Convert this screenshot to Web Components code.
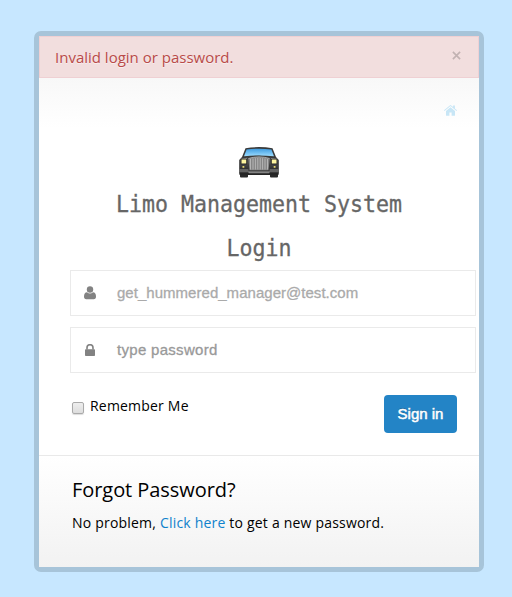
<!DOCTYPE html>
<html lang="en">
<head>
<meta charset="utf-8">
<title>Limo Management System Login</title>
<style>
body{margin:0;height:597px;background:#c7e7ff;overflow:hidden;font-family:"Open Sans","Noto Sans",sans-serif;color:#000;display:flex;justify-content:center;align-items:flex-start}
</style>
</head>
<body>
<limo-card></limo-card>
<script>
function define(name, html){
  const t=document.createElement('template');t.innerHTML=html;
  customElements.define(name,class extends HTMLElement{
    constructor(){super();this.attachShadow({mode:'open'}).append(t.content.cloneNode(true));}
  });
}
define('limo-alert',`<style>
:host{display:flex;box-sizing:border-box;height:42px;border:1px solid #efd0d3;background:#f2dede;color:#b94a48;font-size:15px;padding:0 17px 0 15px;justify-content:space-between;line-height:41px;text-shadow:0 1px 0 rgba(255,255,255,.5)}
svg{width:9px;height:9px;margin-top:14px;stroke:#c2b2b2;stroke-width:1.8;fill:none}
</style><span><slot></slot></span><svg viewBox="0 0 10 10" aria-label="Close"><path d="M1 1L9 9M9 1L1 9"/></svg>`);
define('limo-home',`<style>
:host{display:flex;justify-content:flex-end;padding:27px 22px 0 0;height:12px}
svg{width:13px;height:11px;fill:#c8e6f6}
</style><svg viewBox="0 0 13 11"><path d="M6.5 2.2L11 6v4.3q0 .5-.5.5H7.6V7.4H5.4v3.4H2.5q-.5 0-.5-.5V6z"/><path d="M.5 5.9L0 5.3 5.8.4q.7-.6 1.4 0L9.1 2V.5h1.8v3L13 5.3l-.5.6-6-5z"/></svg>`);
define('limo-car',`<style>
:host{display:block;width:42px;height:32px;margin:30px auto 0}
svg{display:block}
</style><svg width="42" height="32" viewBox="0 0 42 32">
<defs>
<linearGradient id="g" x2="0" y2="1"><stop offset="0" stop-color="#3f9ce0"/><stop offset="1" stop-color="#9bdcff"/></linearGradient>
<linearGradient id="b" x2="0" y2="1"><stop offset="0" stop-color="#8a8a8a"/><stop offset=".4" stop-color="#555"/><stop offset="1" stop-color="#303030"/></linearGradient>
</defs>
<path d="M2 23h8v6.600q0 1-1 1H3q-1 0-1-1zM32 23h8v6.600q0 1-1 1h-6q-1 0-1-1z" fill="#292929"/>
<path d="M7.500 1.200Q21-1 34.500 1.200L38 10 40.800 13V26q0 1-1 1H2.200q-1 0-1-1V13L4 10z" fill="#3a3a3a"/>
<path d="M8.600 2.600Q21 .8 33.400 2.600L36 9.200Q21 7.600 6 9.200z" fill="url(#g)"/>
<path d="M3 11.800Q21 8.300 39 11.800L40.200 14V22H1.800V14z" fill="url(#b)"/>
<path d="M1.200 22h39.600v3.500H1.200z" fill="#626262"/><path d="M1.500 25.500h39V28h-39z" fill="#252525"/>
<path d="M9 10.500Q21 7 33 10.500L31.500 24h-21z" fill="#3a3a3a"/>
<path d="M10.200 11.500Q21 8.300 31.800 11.500L30.500 23.200h-19z" fill="#858585"/>
<path d="M12.500 12v10.500M15 11.500v11M17.400 11.200v11.300M19.800 11v11.500M22.200 11v11.500M24.600 11.200v11.300M27 11.500v11M29.500 12v10.500" stroke="#b5b5b5"/>
<path d="M10.500 11.500Q21 8.300 31.500 11.500" stroke="#aaa" fill="none"/>
<path d="M2.500 12h6.500v5.500H2.500zM33 12h6.500v5.500H33z" fill="#292929"/>
<path d="M3.500 12.600h4.700v4H3.500zM33.800 12.600h4.700v4h-4.700z" fill="#fff6a0"/>
<path d="M4.500 19H6.300v1.700H4.500zM35.700 19h1.800v1.700h-1.800z" fill="#eada72"/>
<path d="M10 24.800h22l-1 1.500H11z" fill="#858585"/>
</svg>`);
define('limo-title',`<style>
:host{display:block;text-align:center}
h1{margin:0;font:400 23px/44px "DejaVu Sans Mono",monospace;color:#666;-webkit-text-stroke:.3px #666;transform:scaleX(.939);white-space:nowrap}
</style><h1><slot></slot></h1>`);
define('limo-field',`<style>
:host{display:flex;box-sizing:border-box;width:406px;height:46px;border:1px solid #eaeaea;background:#fff;align-items:center;margin:0 0 11px 31px;color:var(--ink,#aaa);font:15px/20px "Liberation Sans",Arial,sans-serif}
.i{width:38px;display:flex;justify-content:center}
.t{margin-left:8px;-webkit-text-stroke:.3px;letter-spacing:var(--track,.03px);white-space:nowrap}
</style><span class="i"><slot name="icon"></slot></span><span class="t"><slot></slot></span>`);
define('limo-user-icon',`<style>:host{display:block}svg{display:block;fill:#828282}</style><svg width="12" height="14" viewBox="0 0 12 14"><circle cx="6" cy="3.500" r="3.200"/><path d="M3 6.300Q6 8.800 9 6.300 12 6.500 12 10.500 12 13.300 9.700 13.300H2.300Q0 13.300 0 10.500 0 6.500 3 6.300z"/></svg>`);
define('limo-lock-icon',`<style>:host{display:block}svg{display:block;fill:#828282}</style><svg width="10" height="12" viewBox="0 0 10 12"><path d="M2 5.500V3.700a3 3 0 0 1 6 0v1.800" fill="none" stroke="#828282" stroke-width="1.600"/><rect y="5.200" width="10" height="6.800" rx=".8"/></svg>`);
define('limo-actions',`<style>
:host{display:flex;justify-content:space-between;align-items:flex-start;padding:11px 22px 0 33px;height:49px;font-size:14px;line-height:22px}
label{display:flex;gap:6px;letter-spacing:.2px}
i{box-sizing:border-box;width:12px;height:12px;margin-top:7px;border:1px solid #aaa;border-radius:2px;background:linear-gradient(#eee,#ddd);box-shadow:0 1px 1px #ddd}
button{width:73px;height:38px;border:0;border-radius:4px;background:#2384c6;color:#fff;padding:0;font:15px/38px "Liberation Sans",Arial,sans-serif;-webkit-text-stroke:.5px #fff;text-shadow:0 -1px 0 rgba(0,0,0,.25)}
</style><label><i></i><span>Remember Me</span></label><button>Sign in</button>`);
define('limo-forgot',`<style>
:host{display:block;box-sizing:border-box;flex:1;border-top:1px solid #e9e9e9;background:linear-gradient(#fff,#f2f2f2);padding:18px 33px 0}
h2{margin:0;font-weight:400;font-size:20px;line-height:32px;letter-spacing:-.06px}
p{margin:6px 0 0;font-size:14px;line-height:22px;white-space:nowrap;letter-spacing:.2px}
a{color:#0f82cc;text-decoration:none}
</style><h2>Forgot Password?</h2><p>No problem, <a href="#">Click here</a> to get a new password.</p>`);
define('limo-card',`<style>
:host{display:flex;flex-direction:column;box-sizing:border-box;width:450px;height:541px;margin:31px 0 0 6px;border:5px solid #a7c4d9;border-radius:7px;background:#fff}
.top{background:linear-gradient(#f8f8f8,#fff 50px);height:377px}
limo-title{margin-top:3px}
</style>
<limo-alert>Invalid login or password.</limo-alert>
<div class="top">
<limo-home></limo-home><limo-car></limo-car>
<limo-title>Limo Management System<br>Login</limo-title>
<limo-field><limo-user-icon slot="icon"></limo-user-icon>get_hummered_manager@test.com</limo-field>
<limo-field style="--ink:#999;--track:.3px"><limo-lock-icon slot="icon"></limo-lock-icon>type password</limo-field>
<limo-actions></limo-actions>
</div>
<limo-forgot></limo-forgot>`);
</script>
</body>
</html>
